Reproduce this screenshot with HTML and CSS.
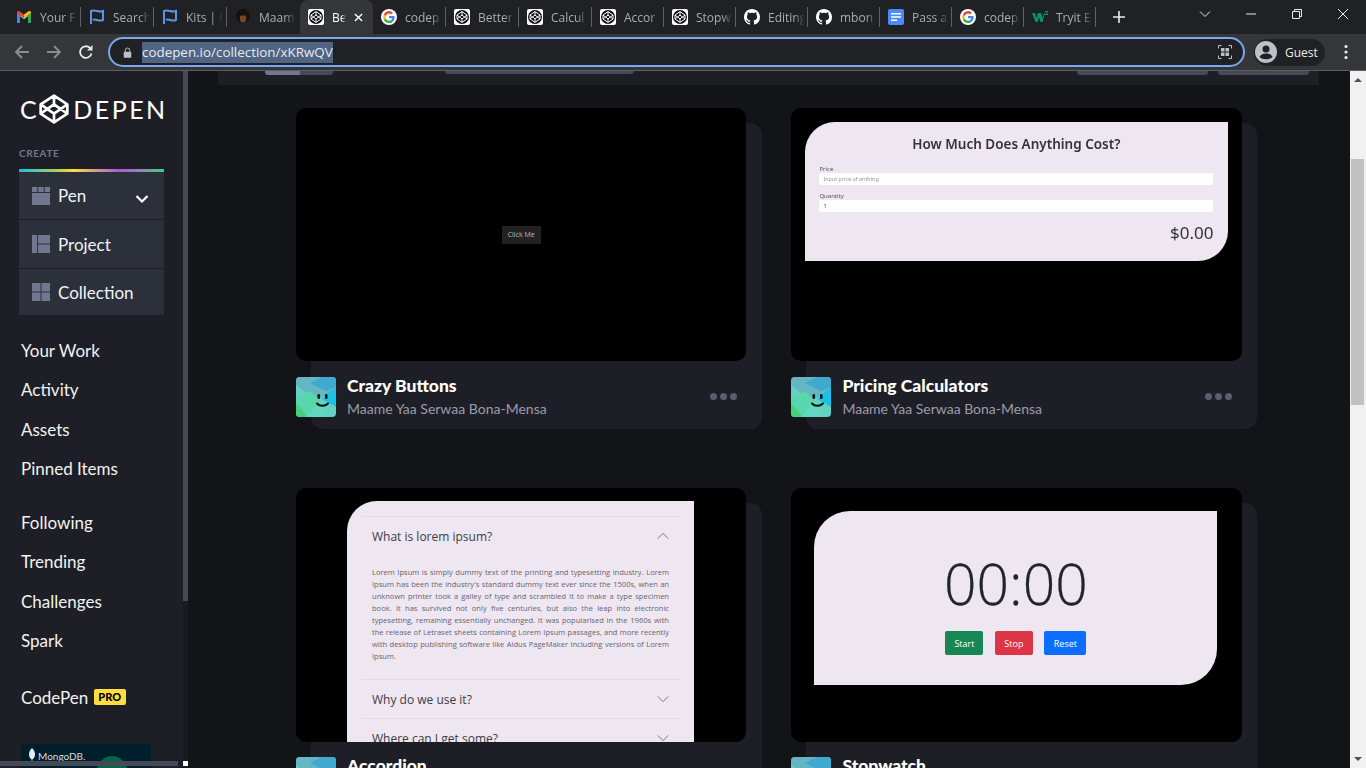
FILE: index.html
```html
<!DOCTYPE html>
<html lang="en">
<head>
  <meta charset="UTF-8" />
  <title>CodePen Collection</title>
  <link rel="stylesheet" href="styles.css">
</head>
<body>

  <svg class="defs" width="0" height="0">
    <symbol id="cube" viewBox="0 0 24 24">
      <path d="M12 2 22 8.5V15.5L12 22 2 15.5V8.5ZM12 2V8.5M22 8.5 12 15.5 2 8.5M2 15.5 12 8.5 22 15.5M12 15.5V22" fill="none" stroke="currentColor" stroke-width="2" stroke-linejoin="round"/>
    </symbol>
    <symbol id="fav-cp" viewBox="0 0 16 16">
      <rect width="16" height="16" rx="2" fill="#fff"/>
      <circle cx="8" cy="8" r="7" fill="#111"/>
      <path d="M8 2.6 13 6v4L8 13.4 3 10V6ZM8 2.6V6M13 6 8 10 3 6M3 10l5-4 5 4M8 10v3.4" fill="none" stroke="#fff" stroke-width="1"/>
    </symbol>
    <symbol id="fav-g" viewBox="0 0 16 16">
      <circle cx="8" cy="8" r="8" fill="#fff"/>
      <path d="M13.6 8.2c0-.4 0-.8-.1-1.2H8v2.3h3.2a2.7 2.7 0 0 1-1.2 1.8l1.9 1.4c1.1-1 1.7-2.500 1.700-4.300z" fill="#4285f4"/>
      <path d="M8 14c1.600 0 2.900-.5 3.900-1.500L10 11.100c-.5.4-1.200.6-2 .6-1.500 0-2.800-1-3.300-2.400l-1.900 1.500A5.900 5.900 0 0 0 8 14z" fill="#34a853"/>
      <path d="M4.700 9.300a3.500 3.500 0 0 1 0-2.400L2.800 5.400a5.900 5.900 0 0 0 0 5.400z" fill="#fbbc05"/>
      <path d="M8 4.400c.9 0 1.600.3 2.200.9l1.700-1.700A5.800 5.800 0 0 0 2.800 5.400l1.900 1.500C5.200 5.400 6.500 4.400 8 4.400z" fill="#ea4335"/>
    </symbol>
    <symbol id="fav-gh" viewBox="0 0 16 16">
      <path fill="#fff" d="M8 0C3.580 0 0 3.580 0 8c0 3.540 2.290 6.530 5.470 7.590.4.070.55-.17.55-.38 0-.19-.01-.82-.01-1.490-2.010.37-2.530-.49-2.690-.94-.09-.23-.48-.94-.82-1.130-.28-.15-.68-.52-.01-.53.63-.01 1.080.58 1.230.82.720 1.210 1.870.87 2.330.66.070-.52.280-.87.510-1.070-1.780-.2-3.640-.89-3.640-3.950 0-.87.310-1.590.820-2.150-.08-.2-.36-1.020.08-2.120 0 0 .67-.21 2.200.82.640-.18 1.320-.27 2-.27s1.360.09 2 .27c1.530-1.040 2.200-.82 2.200-.82.440 1.100.16 1.920.08 2.120.51.560.820 1.270.820 2.150 0 3.070-1.870 3.750-3.650 3.950.29.250.54.730.54 1.480 0 1.070-.01 1.930-.01 2.200 0 .21.150.460.550.380A8.010 8.010 0 0 0 16 8c0-4.420-3.580-8-8-8z"/>
    </symbol>
    <symbol id="fav-flag" viewBox="0 0 16 16">
      <path d="M2 15V2c4-2 8 2 12 0v9c-4 2-8-2-10 0" fill="none" stroke="#5a95e4" stroke-width="2"/>
    </symbol>
    <symbol id="smile" viewBox="0 0 40 40">
      <rect width="40" height="40" fill="#62d2c2"/>
      <path d="M0 0H40V12L20 24 0 8Z" fill="#63b6c2"/>
      <path d="M26 0H40V10L30 14 14 6Z" fill="#3fa9cf"/>
      <path d="M40 10V30L26 22Z" fill="#1dc0e6"/>
      <path d="M0 22 14 14 26 24 10 40H0Z" fill="#58d6ae"/>
      <path d="M0 26 12 40H0Z" fill="#45d07c"/>
      <path d="M10 40 26 24 32 40Z" fill="#63d8c0"/>
      <rect x="21.500" y="17" width="2.500" height="5" rx="1.200" fill="#111"/>
      <rect x="29" y="17" width="2.500" height="5" rx="1.200" fill="#111"/>
      <path d="M21 26.500c2.500 3 8 3 11 0" fill="none" stroke="#111" stroke-width="2" stroke-linecap="round"/>
    </symbol>
    <symbol id="chev" viewBox="0 0 16 10">
      <path d="M1 1.500 8 8.500 15 1.500" fill="none" stroke="currentColor" stroke-width="1"/>
    </symbol>
  </svg>

  <div class="tabstrip">
    <div class="tab">
      <svg class="fav" viewBox="0 0 16 16"><path d="M1 14V4l7 5 7-5v10h-3V7L8 10 4 7v7Z" fill="#fff"/><path d="M1 14V3.500L4 6v8Z" fill="#4285f4"/><path d="M15 14V3.500L12 6v8Z" fill="#34a853"/><path d="M1 3.500C1 2 2.500 1.500 3.500 2.200L8 5.500l-.1 3.500L1 4Z" fill="#ea4335"/><path d="M15 3.500C15 2 13.500 1.500 12.500 2.200L8 5.500V9l7-5Z" fill="#fbbc05"/></svg>
      <span class="tab-title">Your F</span>
    </div>
    <div class="tab"><svg class="fav"><use href="#fav-flag"/></svg><span class="tab-title">Search</span></div>
    <div class="tab"><svg class="fav"><use href="#fav-flag"/></svg><span class="tab-title">Kits | F</span></div>
    <div class="tab tab-before-active">
      <svg class="fav" viewBox="0 0 16 16"><circle cx="8" cy="7" r="7" fill="#15110f"/><ellipse cx="8" cy="9.500" rx="3.200" ry="4" fill="#7a4526"/><path d="M5 6.500h6L10 5H6Z" fill="#15110f"/></svg>
      <span class="tab-title">Maam</span>
    </div>
    <div class="tab tab-active">
      <svg class="fav"><use href="#fav-cp"/></svg>
      <span class="tab-title">Be</span>
      <svg class="tab-close" viewBox="0 0 10 10"><path d="M1 1 9 9M9 1 1 9" stroke="#fff" stroke-width="1.500"/></svg>
    </div>
    <div class="tab"><svg class="fav"><use href="#fav-g"/></svg><span class="tab-title">codep</span></div>
    <div class="tab"><svg class="fav"><use href="#fav-cp"/></svg><span class="tab-title">Better</span></div>
    <div class="tab"><svg class="fav"><use href="#fav-cp"/></svg><span class="tab-title">Calcul</span></div>
    <div class="tab"><svg class="fav"><use href="#fav-cp"/></svg><span class="tab-title">Accor</span></div>
    <div class="tab"><svg class="fav"><use href="#fav-cp"/></svg><span class="tab-title">Stopw</span></div>
    <div class="tab"><svg class="fav"><use href="#fav-gh"/></svg><span class="tab-title">Editing</span></div>
    <div class="tab"><svg class="fav"><use href="#fav-gh"/></svg><span class="tab-title">mbon</span></div>
    <div class="tab">
      <svg class="fav" viewBox="0 0 16 16"><rect width="16" height="16" rx="2" fill="#4b8bf5"/><path d="M3 4h10v1.500H3ZM3 7.200h10v1.500H3ZM3 10.400h6v1.500H3Z" fill="#fff"/></svg>
      <span class="tab-title">Pass a</span>
    </div>
    <div class="tab"><svg class="fav"><use href="#fav-g"/></svg><span class="tab-title">codep</span></div>
    <div class="tab">
      <svg class="fav" viewBox="0 0 16 16"><path d="M0 4h3l1.500 5L6 4h3l1.500 5L12 4h1l-2.500 9h-2L7 8.500 5.500 13h-2Z" fill="#04956b"/><path d="M13 2h3v1l-1 1 1 1v1h-3V5h2l-1-1 1-1h-2Z" fill="#04956b"/></svg>
      <span class="tab-title">Tryit E</span>
    </div>
    <svg class="newtab" viewBox="0 0 12 12"><path d="M6 0V12M0 6H12" stroke="#e8eaed" stroke-width="1.600"/></svg>
    <div class="winctl">
      <svg class="winbtn" viewBox="0 0 12 12"><path d="M1 3.500 6 8.500 11 3.500" fill="none" stroke="#e8eaed"/></svg>
      <svg class="winbtn" viewBox="0 0 12 12"><path d="M1 6H11" stroke="#e8eaed"/></svg>
      <svg class="winbtn" viewBox="0 0 12 12"><path d="M1.500 3.500h7v7h-7ZM3.500 3.500v-2h7v7h-2" fill="none" stroke="#e8eaed"/></svg>
      <svg class="winbtn" viewBox="0 0 12 12"><path d="M1 1 11 11M11 1 1 11" stroke="#e8eaed"/></svg>
    </div>
  </div>

  <div class="toolbar">
    <svg class="tool-ic" viewBox="0 0 16 16"><path d="M15 8H2M8 2 2 8l6 6" fill="none" stroke="#8b8d90" stroke-width="1.800"/></svg>
    <svg class="tool-ic" viewBox="0 0 16 16"><path d="M1 8H14M8 2l6 6-6 6" fill="none" stroke="#8b8d90" stroke-width="1.800"/></svg>
    <svg class="tool-ic" viewBox="0 0 16 16"><path d="M13.500 9.500A5.800 5.800 0 1 1 12 4" fill="none" stroke="#e8eaed" stroke-width="1.800"/><path d="M14.500 1v5.500H9Z" fill="#e8eaed"/></svg>
    <div class="omnibox">
      <svg class="lock" viewBox="0 0 12 14"><path d="M3 6V4a3 3 0 0 1 6 0v2" fill="none" stroke="#bdc1c6" stroke-width="1.300"/><rect x="1" y="6" width="10" height="8" rx="1" fill="#bdc1c6"/></svg>
      <span class="url">codepen.io/collection/xKRwQV</span>
      <svg class="qr" viewBox="0 0 14 14"><path d="M.5 3.500V.5h3M10.500.5h3v3M13.500 10.500v3h-3M3.500 13.500h-3v-3" fill="none" stroke="#bdc1c6"/><path d="M3 3h3.500v3.500H3ZM7.500 3H11v3.500H7.500ZM3 7.500h3.500V11H3ZM7.500 7.500H11V11H7.500Z" fill="#bdc1c6"/></svg>
    </div>
    <div class="guest">
      <svg class="guest-ic" viewBox="0 0 22 22"><circle cx="11" cy="11" r="11" fill="#bdc1c6"/><circle cx="11" cy="8" r="3.500" fill="#202124"/><path d="M4.500 16c1.500-3 3.500-3.500 6.500-3.500s5 .5 6.500 3.500c-3 3-10 3-13 0Z" fill="#202124"/></svg>
      <span>Guest</span>
    </div>
    <svg class="kebab" viewBox="0 0 4 16"><circle cx="2" cy="2.500" r="1.600" fill="#e8eaed"/><circle cx="2" cy="8" r="1.600" fill="#e8eaed"/><circle cx="2" cy="13.500" r="1.600" fill="#e8eaed"/></svg>
  </div>

  <div class="page">
    <aside class="sidebar">
      <div class="logo">
        <span>C</span><svg class="logo-cube"><use href="#cube"/></svg><span>DEPEN</span>
      </div>
      <div class="create-label">CREATE</div>
      <div class="create-box">
        <div class="create-row">
          <svg class="create-ic" viewBox="0 0 18 18"><path d="M0 0h5.300v5H0ZM6.300 0h5.400v5H6.300ZM12.700 0H18v5h-5.300ZM0 6h18v12H0Z" fill="#717790"/></svg>
          <span>Pen</span>
          <svg class="create-chev" viewBox="0 0 14 10"><path d="M1.500 2 7 7.500 12.500 2" fill="none" stroke="#fff" stroke-width="2.200"/></svg>
        </div>
        <div class="create-row">
          <svg class="create-ic" viewBox="0 0 18 18"><path d="M0 0h5v18H0ZM6 0h12v8.500H6ZM6 9.500h12V18H6Z" fill="#717790"/></svg>
          <span>Project</span>
        </div>
        <div class="create-row">
          <svg class="create-ic" viewBox="0 0 18 18"><path d="M0 0h8.500v8.500H0ZM9.500 0H18v8.500H9.500ZM0 9.500h8.500V18H0ZM9.500 9.500H18V18H9.500Z" fill="#717790"/></svg>
          <span>Collection</span>
        </div>
      </div>

      <nav class="side-nav">
        <a>Your Work</a>
        <a>Activity</a>
        <a>Assets</a>
        <a>Pinned Items</a>
      </nav>
      <nav class="side-nav">
        <a>Following</a>
        <a>Trending</a>
        <a>Challenges</a>
        <a>Spark</a>
      </nav>
      <div class="side-pro">CodePen <span class="pro">PRO</span></div>

      <div class="ad">
        <svg class="ad-leaf" viewBox="0 0 6 14"><path d="M3 0c2 2 3 4 3 6.500S4.500 11 3.300 11.500V14h-.6v-2.500C1.500 11 0 9 0 6.500S1 2 3 0Z" fill="#e8edeb"/></svg>
        <span>MongoDB.</span>
        <i class="ad-dot"></i>
      </div>
    </aside>
    <div class="side-track"><div class="side-thumb"></div></div>
    <div class="side-hbar"></div>
    <div class="side-corner"></div>

    <main class="main">
      <div class="topbar">
        <div class="seg">
          <i class="seg-on"></i><i class="seg-off"></i>
        </div>
        <i class="peek peek-search"></i>
        <i class="peek peek-a"></i>
        <i class="peek peek-b"></i>
      </div>

      <div class="grid">
        <article class="card">
          <div class="thumb thumb-center">
            <button class="click-btn">Click Me</button>
          </div>
          <div class="meta">
            <svg class="avatar"><use href="#smile"/></svg>
            <div class="meta-text">
              <h3>Crazy Buttons</h3>
              <p>Maame Yaa Serwaa Bona-Mensa</p>
            </div>
            <div class="dots"><i></i><i></i><i></i></div>
          </div>
        </article>

        <article class="card">
          <div class="thumb">
            <div class="pricing">
              <h4>How Much Does Anything Cost?</h4>
              <label>Price</label>
              <div class="fake-input fake-ph">Input price of anthing</div>
              <label>Quantity</label>
              <div class="fake-input">1</div>
              <div class="total">$0.00</div>
            </div>
          </div>
          <div class="meta">
            <svg class="avatar"><use href="#smile"/></svg>
            <div class="meta-text">
              <h3>Pricing Calculators</h3>
              <p>Maame Yaa Serwaa Bona-Mensa</p>
            </div>
            <div class="dots"><i></i><i></i><i></i></div>
          </div>
        </article>

        <article class="card">
          <div class="thumb">
            <div class="accordion">
              <div class="acc-head">What is lorem ipsum? <svg class="acc-chev acc-up"><use href="#chev"/></svg></div>
              <p class="acc-body">Lorem Ipsum is simply dummy text of the printing and typesetting industry. Lorem Ipsum has been the industry's standard dummy text ever since the 1500s, when an unknown printer took a galley of type and scrambled it to make a type specimen book. It has survived not only five centuries, but also the leap into electronic typesetting, remaining essentially unchanged. It was popularised in the 1960s with the release of Letraset sheets containing Lorem Ipsum passages, and more recently with desktop publishing software like Aldus PageMaker including versions of Lorem Ipsum.</p>
              <div class="acc-head">Why do we use it? <svg class="acc-chev"><use href="#chev"/></svg></div>
              <div class="acc-head">Where can I get some? <svg class="acc-chev"><use href="#chev"/></svg></div>
            </div>
          </div>
          <div class="meta">
            <svg class="avatar"><use href="#smile"/></svg>
            <div class="meta-text">
              <h3>Accordion</h3>
              <p>Maame Yaa Serwaa Bona-Mensa</p>
            </div>
            <div class="dots"><i></i><i></i><i></i></div>
          </div>
        </article>

        <article class="card">
          <div class="thumb">
            <div class="stopwatch">
              <div class="clock">00:00</div>
              <div class="sw-btns">
                <button class="sw-btn sw-start">Start</button>
                <button class="sw-btn sw-stop">Stop</button>
                <button class="sw-btn sw-reset">Reset</button>
              </div>
            </div>
          </div>
          <div class="meta">
            <svg class="avatar"><use href="#smile"/></svg>
            <div class="meta-text">
              <h3>Stopwatch</h3>
              <p>Maame Yaa Serwaa Bona-Mensa</p>
            </div>
            <div class="dots"><i></i><i></i><i></i></div>
          </div>
        </article>
      </div>
    </main>

    <div class="vscroll">
      <svg class="vs-arrow" viewBox="0 0 8 4"><path d="M4 0 8 4H0Z" fill="#505050"/></svg>
      <div class="vs-track"><div class="vs-thumb"></div></div>
      <svg class="vs-arrow" viewBox="0 0 8 4"><path d="M0 0H8L4 4Z" fill="#505050"/></svg>
    </div>
  </div>

</body>
</html>
```

FILE: styles.css
```css
* {
  box-sizing: border-box;
}
html, body {
  margin: 0;
  height: 100%;
}
body {
  width: 1366px;
  height: 768px;
  overflow: hidden;
  display: flex;
  flex-direction: column;
  font-family: Lato, "Liberation Sans", sans-serif;
  background: #131417;
}
.defs {
  position: absolute;
}

/* browser chrome */
.tabstrip {
  height: 34px;
  flex: none;
  display: flex;
  align-items: center;
  padding-left: 8px;
  background: #202124;
  font-family: "Open Sans", "Liberation Sans", sans-serif;
  font-size: 12px;
}
.tab {
  flex: 0 0 73px;
  height: 34px;
  display: flex;
  align-items: center;
  padding-left: 8px;
  gap: 8px;
  color: #a9adb3;
  background-image: linear-gradient(#5f6368, #5f6368);
  background-size: 1px 20px;
  background-position: right center;
  background-repeat: no-repeat;
}
.tab:nth-child(n+9) {
  flex-basis: 72px;
}
.tab-before-active {
  background-image: none;
}
.tab-active {
  background: #35363a;
  border-radius: 8px 8px 0 0;
  color: #fff;
}
.fav {
  width: 16px;
  height: 16px;
  flex: none;
}
.tab-title {
  width: 37px;
  white-space: nowrap;
  -webkit-mask-image: linear-gradient(to right, #000 70%, transparent);
  mask-image: linear-gradient(to right, #000 70%, transparent);
}
.tab-active .tab-title {
  width: 14px;
}
.tab-close {
  width: 9px;
  height: 9px;
  flex: none;
}
.newtab {
  width: 12px;
  height: 12px;
  margin-left: 17px;
}
.winctl {
  margin-left: auto;
  display: flex;
  align-self: flex-start;
  padding-top: 8px;
}
.winbtn {
  width: 12px;
  height: 12px;
  margin-right: 34px;
}
.winbtn:last-child {
  margin-right: 17px;
}

.toolbar {
  height: 37px;
  flex: none;
  display: flex;
  align-items: center;
  background: #35363a;
  border-bottom: 1px solid #5c5d5f;
  padding-left: 14px;
}
.tool-ic {
  width: 16px;
  height: 16px;
  margin-right: 16px;
}
.omnibox {
  width: 1137px;
  height: 30px;
  margin-left: -2px;
  display: flex;
  align-items: center;
  background: #202124;
  border: 2px solid #7aa7ee;
  border-radius: 15px;
  padding: 0 11px 0 13px;
  font-family: "Open Sans", "Liberation Sans", sans-serif;
  font-size: 13.400px;
}
.lock {
  width: 9px;
  height: 11px;
  flex: none;
  margin-right: 10px;
}
.url {
  background: #4f6583;
  color: #e8eaed;
  line-height: 21px;
  width: 191px;
  white-space: nowrap;
}
.qr {
  width: 14px;
  height: 14px;
  margin-left: auto;
}
.guest {
  width: 71px;
  height: 27px;
  margin-left: 9px;
  display: flex;
  align-items: center;
  gap: 8px;
  padding-left: 1px;
  border-radius: 14px;
  background: #202124;
  color: #e8eaed;
  font-family: "Open Sans", "Liberation Sans", sans-serif;
  font-size: 12px;
}
.guest-ic {
  width: 22px;
  height: 22px;
}
.kebab {
  width: 4px;
  height: 16px;
  margin-left: 19px;
}

/* page */
.page {
  flex: 1;
  min-height: 0;
  display: flex;
  position: relative;
  overflow: hidden;
}
.sidebar {
  width: 183px;
  flex: none;
  background: #1e1f26;
  color: #fff;
  padding: 23px 0 0 19px;
  overflow: hidden;
}
.side-track {
  width: 5px;
  flex: none;
  background: #1a1b20;
}
.side-thumb {
  height: 530px;
  background: #444857;
}
.side-hbar {
  position: absolute;
  left: 0;
  top: 690px;
  width: 178px;
  height: 5px;
  background: #444857;
}
.side-corner {
  position: absolute;
  left: 183px;
  top: 690px;
  width: 5px;
  height: 5px;
  background: #fff;
}
.logo {
  display: flex;
  align-items: center;
  height: 30px;
  margin-left: 1px;
  font-size: 25px;
  font-weight: 400;
  letter-spacing: 2.500px;
  white-space: nowrap;
}
.logo-cube {
  width: 32px;
  height: 32px;
  flex: none;
  color: #fff;
  margin: 0 3px 0 -1px;
}
.create-label {
  margin-top: 23px;
  font-size: 10px;
  font-weight: 700;
  letter-spacing: 0.6px;
  line-height: 12px;
  color: #717790;
}
.create-box {
  width: 145px;
  margin-top: 10px;
  border-top: 3px solid;
  border-image: linear-gradient(to right, #12bfe8, #c8d24a 30%, #ffdd40 38%, #ad5bd8 68%, #8a8fb0 85%, #3fcf7a) 1;
  background: #2c303a;
  overflow: hidden;
}
.create-row {
  height: 49px;
  display: flex;
  align-items: center;
  padding-left: 13px;
  gap: 8px;
  font-size: 17px;
  color: #f2f2f2;
  border-bottom: 1px solid #1e1f26;
}
.create-row:first-child {
  height: 48px;
}
.create-row:last-child {
  height: 46px;
  border-bottom: 0;
}
.create-ic {
  width: 18px;
  height: 18px;
  flex: none;
}
.create-chev {
  width: 14px;
  height: 10px;
  margin-left: auto;
  margin-right: 15px;
  margin-top: 6px;
}
.side-nav {
  margin: 16px 0 0 2px;
  font-size: 17px;
  line-height: 39.3px;
  color: #f2f2f2;
}
.side-nav + .side-nav {
  margin-top: 15px;
}
.side-pro {
  margin: 18px 0 0 2px;
  font-size: 17px;
  line-height: 39px;
  color: #f2f2f2;
  white-space: nowrap;
}
.side-nav a {
  display: block;
}
.pro {
  display: inline-block;
  vertical-align: 3px;
  width: 32px;
  height: 16px;
  margin-left: 1px;
  border-radius: 2px;
  background: #ffdd40;
  color: #000;
  font-size: 11px;
  font-weight: 900;
  line-height: 16px;
  text-align: center;
}
.ad {
  position: relative;
  width: 130px;
  height: 60px;
  margin: 27px 0 0 2px;
  padding: 4px 0 0 8px;
  display: flex;
  gap: 3px;
  background: #001e2b;
  color: #d6dcdf;
  font-size: 10px;
  line-height: 16px;
  overflow: hidden;
}
.ad-leaf {
  width: 6px;
  height: 14px;
}
.ad-dot {
  position: absolute;
  left: 76px;
  top: 12px;
  width: 30px;
  height: 30px;
  border-radius: 50%;
  background: #00684a;
}

.main {
  flex: 1;
  min-width: 0;
  overflow: hidden;
}
.topbar {
  height: 14px;
  margin: 0 31px 0 30px;
  display: flex;
  align-items: flex-start;
  background: #1e1f26;
}
.seg {
  display: flex;
  margin-left: 47px;
}
.seg i {
  display: block;
  height: 4px;
}
.seg-on {
  width: 35px;
  background: #717790;
  border-radius: 0 0 0 3px;
}
.seg-off {
  width: 33px;
  background: #444857;
  border-radius: 0 0 3px 0;
}
.peek {
  display: block;
  height: 3px;
  background: #444857;
  border-radius: 0 0 3px 3px;
}
.peek-search {
  width: 189px;
  margin-left: 112px;
}
.peek-a {
  width: 131px;
  height: 4px;
  margin-left: 443px;
}
.peek-b {
  width: 91px;
  height: 4px;
  margin-left: 10px;
}

.grid {
  display: grid;
  grid-template-columns: 466px 466px;
  column-gap: 29.400px;
  row-gap: 59.500px;
  margin: 22.600px 0 0 108px;
}
.card {
  margin: 15px 0 0 15px;
  background: #1e1f26;
  border-radius: 12px;
  padding-bottom: 12px;
}
.thumb {
  height: 253.500px;
  margin: -15px 15.600px 0 -15px;
  background: #000;
  border-radius: 10px;
  overflow: hidden;
}
.thumb-center {
  display: flex;
  align-items: center;
  justify-content: center;
}
.click-btn {
  width: 39px;
  height: 18px;
  margin-top: 1px;
  padding: 0;
  border: 0;
  background: #222;
  color: #bbb;
  font-family: "Open Sans", sans-serif;
  font-size: 7px;
}
.meta {
  height: 40px;
  margin: 15.600px 16px 0 -15px;
  display: flex;
  align-items: center;
}
.avatar {
  width: 40px;
  height: 40px;
  flex: none;
  border-radius: 4px;
}
.meta-text {
  flex: 1;
  margin-left: 11px;
}
.meta-text h3 {
  margin: 0;
  font-size: 17.500px;
  font-weight: 900;
  line-height: 20px;
  color: #fff;
}
.meta-text p {
  margin: 3px 0 0;
  font-size: 14px;
  line-height: 19px;
  color: #9a9cab;
}
.dots {
  display: flex;
  gap: 3px;
  margin-right: 9px;
}
.dots i {
  width: 7px;
  height: 7px;
  border-radius: 50%;
  background: #5a5d70;
}

/* pricing thumbnail */
.pricing {
  width: 423px;
  height: 139px;
  margin: 14px 0 0 14px;
  padding: 0 15px 0 14px;
  background: #eee7f2;
  border-radius: 30px 0 30px 0;
  color: #33333b;
  font-family: "Noto Sans", "Open Sans", sans-serif;
  filter: blur(0.25px);
}
.pricing h4 {
  margin: 0 0 12px;
  padding-top: 13px;
  font-size: 13.500px;
  font-weight: 600;
  line-height: 18px;
  text-align: center;
}
.pricing label {
  display: block;
  margin-top: 6px;
  font-size: 6px;
  line-height: 8px;
  color: #555;
}
.fake-input + label {
  margin-top: 7px;
}
.fake-input {
  height: 12px;
  padding-left: 4px;
  background: #fdfdfd;
  font-size: 5.400px;
  line-height: 12px;
  color: #444;
}
.fake-ph {
  color: #999;
}
.total {
  margin-top: 9px;
  font-size: 17px;
  line-height: 24px;
  text-align: right;
}

/* accordion thumbnail */
.accordion {
  width: 347px;
  height: 260px;
  margin: 13px 0 0 51px;
  padding: 15px 14px 0 14px;
  background: #eee7f2;
  border-radius: 30px 0 0 0;
  font-family: "Open Sans", sans-serif;
  color: #3c3c44;
}
.acc-head {
  height: 39px;
  display: flex;
  align-items: center;
  justify-content: space-between;
  padding: 0 11px 0 11px;
  border-top: 1px solid #e3dbe6;
  font-size: 12px;
}
.acc-chev {
  width: 12px;
  height: 8px;
  color: #555;
}
.acc-up {
  transform: rotate(180deg);
}
.acc-body {
  margin: 0;
  padding: 11px 11px 17px;
  font-size: 7.550px;
  line-height: 12px;
  text-align: justify;
  color: #66646c;
}

/* stopwatch thumbnail */
.stopwatch {
  width: 403px;
  height: 174px;
  margin: 23px 0 0 23px;
  padding-top: 34px;
  background: #eee7f2;
  border-radius: 36px 0 36px 0;
  display: flex;
  flex-direction: column;
  align-items: center;
}
.clock {
  font-family: "Open Sans", sans-serif;
  font-size: 57px;
  font-weight: 300;
  line-height: 76px;
  color: #212529;
  -webkit-text-stroke: 0.3px #212529;
}
.sw-btns {
  display: flex;
  gap: 11.500px;
  margin-top: 10px;
}
.sw-btn {
  width: 38px;
  height: 24px;
  padding: 0;
  border: 0;
  border-radius: 2px;
  color: #fff;
  font-family: "Open Sans", sans-serif;
  font-size: 9px;
}
.sw-start {
  background: #198754;
}
.sw-stop {
  background: #dc3545;
}
.sw-reset {
  width: 42px;
  background: #0d6efd;
}

/* window scrollbar */
.vscroll {
  width: 16px;
  flex: none;
  display: flex;
  flex-direction: column;
  align-items: center;
  background: #f1f1f1;
  padding: 7px 0;
}
.vs-arrow {
  width: 8px;
  height: 4px;
  flex: none;
}
.vs-track {
  flex: 1;
  width: 100%;
}
.vs-thumb {
  width: 13px;
  height: 246px;
  margin: 77px 0 0 1px;
  background: #c1c1c1;
}
```
